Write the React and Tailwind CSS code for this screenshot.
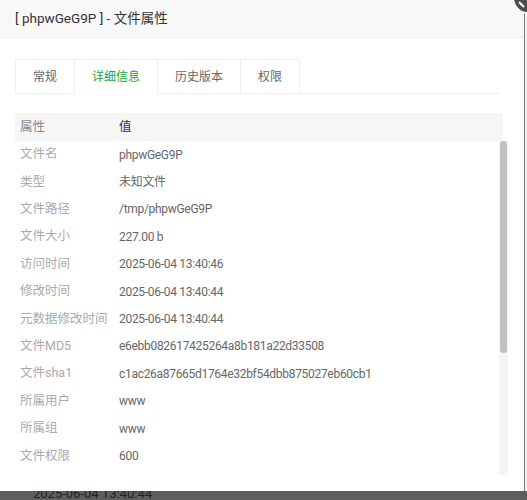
import { useState } from "react";

const rows = [
  ["文件名", "phpwGeG9P"],
  ["类型", "未知文件"],
  ["文件路径", "/tmp/phpwGeG9P"],
  ["文件大小", "227.00 b"],
  ["访问时间", "2025-06-04 13:40:46"],
  ["修改时间", "2025-06-04 13:40:44"],
  ["元数据修改时间", "2025-06-04 13:40:44"],
  ["文件MD5", "e6ebb082617425264a8b181a22d33508"],
  ["文件sha1", "c1ac26a87665d1764e32bf54dbb875027eb60cb1"],
  ["所属用户", "www"],
  ["所属组", "www"],
  ["文件权限", "600"],
];

const tabs = ["常规", "详细信息", "历史版本", "权限"];

export default function App() {
  const [active, setActive] = useState(1);

  return (
    <div
      className="relative w-[527px] h-[500px] overflow-hidden bg-[#5e5e5e]"
      style={{ fontFamily: "Roboto, 'Noto Sans CJK SC', sans-serif" }}
    >
      <div className="flex h-[491px]">
        {/* 弹窗 */}
        <div className="w-[524px] bg-white flex flex-col">
          <div className="h-[38px] shrink-0 bg-[#f8f8f8] border-b border-[#eee] flex items-center pl-[15px] text-[13.5px] text-[#333]">
            [ phpwGeG9P ] - 文件属性
          </div>

          <div className="pl-[15px] pt-[21px]">
            {/* 탭 */}
            <div className="w-[485px] flex border-b border-[#eee]">
              {tabs.map((t, i) => (
                <div
                  key={t}
                  onClick={() => setActive(i)}
                  className={`h-[35px] px-[17px] flex items-center text-[12px] cursor-pointer border-t border-l border-[#eee] -mb-px ${
                    i === tabs.length - 1 ? "border-r" : ""
                  } ${i === active ? "text-[#20a53a] bg-white border-b border-b-white" : "text-[#666]"}`}
                >
                  {t}
                </div>
              ))}
            </div>

            {/* 表头 */}
            <div className="mt-[19px] w-[488px] h-[28px] bg-[#f6f6f6] flex items-center text-[12.5px]">
              <div className="w-[104px] pl-[5px] text-[#888]">属性</div>
              <div className="text-[#333]">值</div>
            </div>

            {/* 内容 + 滚动条 */}
            <div className="w-[493px] h-[334px] flex">
              <div className="flex-1 overflow-hidden">
                {rows.map(([k, v]) => (
                  <div key={k} className="h-[27.4px] flex items-center">
                    <div className="w-[104px] pl-[5px] text-[12.5px] text-[#aaa] whitespace-nowrap">{k}</div>
                    <div className="text-[12px] text-[#666] tracking-[-0.3px] whitespace-nowrap">{v}</div>
                  </div>
                ))}
              </div>
              <div className="w-[9px] bg-[#f4f4f4] flex flex-col">
                <div className="h-[212px] mx-px rounded-full bg-[#c1c1c1]" />
              </div>
            </div>
          </div>
        </div>
        <div className="w-px bg-[#777]" />
        <div className="flex-1 bg-[#f2f2f2]" />
      </div>

      {/* 背景页面 */}
      <div className="h-[9px] overflow-hidden pl-[33px]">
        <div className="-mt-[5px] text-[13px] leading-[16px] text-[#222]">2025-06-04 13:40:44</div>
      </div>

      {/* 关闭按钮 */}
      <svg className="absolute z-10 right-0 top-0" width="16" height="15" viewBox="0 0 16 15">
        <circle cx="17" cy="-2" r="15" fill="#4d4d4d" stroke="#fff" strokeWidth="2" />
        <path d="M8 2 L13 7" stroke="#fff" strokeWidth="2" />
      </svg>
    </div>
  );
}
